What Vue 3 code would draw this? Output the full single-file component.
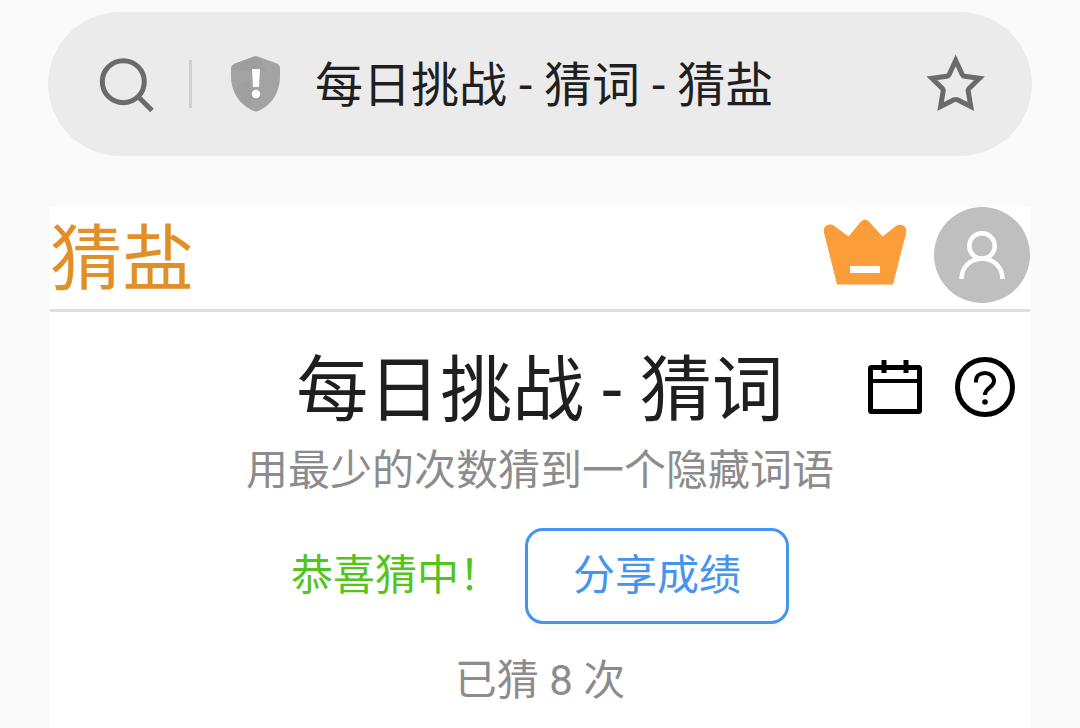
<script setup>
const site = '猜盐'
const title = '每日挑战 - 猜词'
const guesses = 8
</script>

<template>
  <div class="screen">
    <div class="address-bar">
      <button class="icon-button" type="button" aria-label="搜索">
        <svg width="56" height="60" viewBox="0 0 56 60" fill="none" stroke="#6b6b6b" stroke-width="5">
          <circle cx="25.300" cy="27.700" r="21" />
          <path d="M40 42.500 54 56.500" />
        </svg>
      </button>
      <span class="divider"></span>
      <svg class="shield" width="50" height="56" viewBox="0 0 50 56">
        <path fill="#a3a3a3" d="M22.500.8Q25-.4 27.500.8L46 7.500Q49 9 49 12.500V20C49 37 40 50 27 55Q25 56 23 55C10 50 0 37 0 20V12.500Q0 9 4 7.500Z" />
        <path fill="#999" d="M25 0Q33 6 35 17Q31 11 22 14Q10 17 0 13Q0 9 4 7.500L22.500.8Z" opacity=".5" />
        <path fill="#999" d="M4 34Q7 27 18 25Q24 38 18 52Q9 45 4 34Z" opacity=".4" />
        <path fill="#fff" d="M21 13H29L28 31H22Z" />
        <circle cx="25" cy="38" r="4.200" fill="#fff" />
      </svg>
      <span class="address">{{ title }} - {{ site }}</span>
      <button class="icon-button" type="button" aria-label="收藏">
        <svg width="60" height="60" viewBox="0 0 60 60" fill="none" stroke="#6b6b6b" stroke-width="5">
          <path d="M30.700 6.500 37.200 20.500Q38 22 39.500 22.200L54.500 24.200 44 34.500Q43 35.500 43.200 37L45.800 52.500 32.500 45.800Q30.700 45 28.900 45.800L15.600 52.500 18.200 37Q18.400 35.500 17.400 34.500L6.900 24.200 21.900 22.200Q23.400 22 24.200 20.500Z" />
        </svg>
      </button>
    </div>

    <main class="page">
      <header class="site-header">
        <a class="logo" href="#">{{ site }}</a>
        <nav class="account">
          <a class="crown" href="#" aria-label="会员">
            <svg width="84" height="68" viewBox="0 0 84 68">
              <path fill="#fb9e3a" d="M14 66.500 1.200 15.500C-1 7.500 6.500 4.500 11.500 8L25.500 18.500 37.500 4Q42 -1 46.500 4L59.500 18.500 73 8C78 4.500 85 8 83 15.500L70 66.500Z" />
              <path fill="#fff" d="M27 48H57V55H27Z" />
            </svg>
          </a>
          <a class="avatar" href="#" aria-label="个人中心">
            <svg width="48" height="50" viewBox="0 0 48 50" fill="none" stroke="#fff" stroke-width="4.500">
              <circle cx="24" cy="16" r="12.700" />
              <path d="M3.500 49C3.500 37 12.500 28.700 24 28.700S44.500 37 44.500 49" />
            </svg>
          </a>
        </nav>
      </header>

      <section class="heading">
        <h1>{{ title }}</h1>
        <div class="tools">
          <button class="icon-button" type="button" aria-label="日历">
            <svg width="54" height="54" viewBox="0 0 54 54" fill="none" stroke="#000" stroke-width="5">
              <rect x="2.500" y="7.500" width="49" height="44" rx="1" />
              <path d="M2.500 21H51.500" stroke-width="4" />
              <path d="M16 0V13M38 0V13" />
            </svg>
          </button>
          <button class="icon-button" type="button" aria-label="帮助">
            <svg width="60" height="60" viewBox="0 0 60 60" fill="none" stroke="#000">
              <circle cx="30" cy="30" r="27.500" stroke-width="5" />
              <path d="M21 25.500V24C21 19 25 16 30 16S39 19.500 39 24C39 31 30 30.500 30 38" stroke-width="4" />
              <circle cx="30" cy="45" r="2.800" fill="#000" stroke="none" />
            </svg>
          </button>
        </div>
      </section>

      <p class="subtitle">用最少的次数猜到一个隐藏词语</p>

      <div class="result">
        <span class="success">恭喜猜中！</span>
        <button class="share" type="button">分享成绩</button>
      </div>

      <p class="count">已猜 {{ guesses }} 次</p>
    </main>
  </div>
</template>

<style>
body {
  background: #fafafa;
}
</style>

<style scoped>
.screen {
  box-sizing: border-box;
  min-height: 100vh;
  padding-top: 12px;
  display: flex;
  flex-direction: column;
  font-family: Roboto, "Noto Sans CJK SC", sans-serif;
  font-size: 42px;
  line-height: 66px;
  color: #1f1f1f;
}
svg {
  display: block;
}
.icon-button {
  padding: 0;
  border: 0;
  background: none;
}
.address-bar {
  box-sizing: border-box;
  height: 144px;
  margin: 0 48px;
  padding: 0 47px 0 50px;
  display: flex;
  align-items: center;
  border-radius: 72px;
  background: #ebebeb;
}
.divider {
  width: 3px;
  height: 48px;
  margin: 0 39px 0 35px;
  background: #d0d0d0;
}
.address {
  flex: 1;
  margin-left: 34px;
  padding-top: 4px;
  font-size: 48px;
  white-space: nowrap;
}
.page {
  flex: 1;
  margin: 51px 50px 0;
  background: #fff;
}
.site-header {
  height: 102px;
  display: flex;
  justify-content: space-between;
  border-bottom: 3px solid #ddd;
}
.logo {
  font-size: 72px;
  line-height: 106px;
  color: #e19029;
  text-decoration: none;
}
.account {
  display: flex;
  align-items: center;
  gap: 27px;
  height: 96px;
}
.crown {
  padding-bottom: 7px;
}
.avatar {
  width: 96px;
  height: 96px;
  display: flex;
  align-items: center;
  justify-content: center;
  border-radius: 50%;
  background: #bfbfbf;
}
.heading {
  display: grid;
  grid-template-columns: 1fr auto 1fr;
  align-items: center;
  height: 120px;
  margin-top: 15px;
}
h1 {
  grid-column: 2;
  margin: 0;
  padding-top: 8px;
  font-size: 72px;
  line-height: 112px;
  font-weight: 400;
}
.tools {
  display: flex;
  align-items: center;
  justify-content: flex-end;
  gap: 33px;
  padding-right: 15px;
}
p {
  margin: 0;
  text-align: center;
  color: #8c8c8c;
}
.subtitle {
  margin-top: -9px;
}
.result {
  display: flex;
  align-items: center;
  justify-content: center;
  gap: 24px;
  margin: 24px 0;
}
.success {
  color: #52c41a;
}
.share {
  height: 96px;
  padding: 0 45px;
  border: 3px solid #4594ef;
  border-radius: 18px;
  background: #fff;
  box-shadow: 0 6px 0 rgba(0, 0, 0, 0.02);
  color: #4594ef;
  font: inherit;
}
</style>
